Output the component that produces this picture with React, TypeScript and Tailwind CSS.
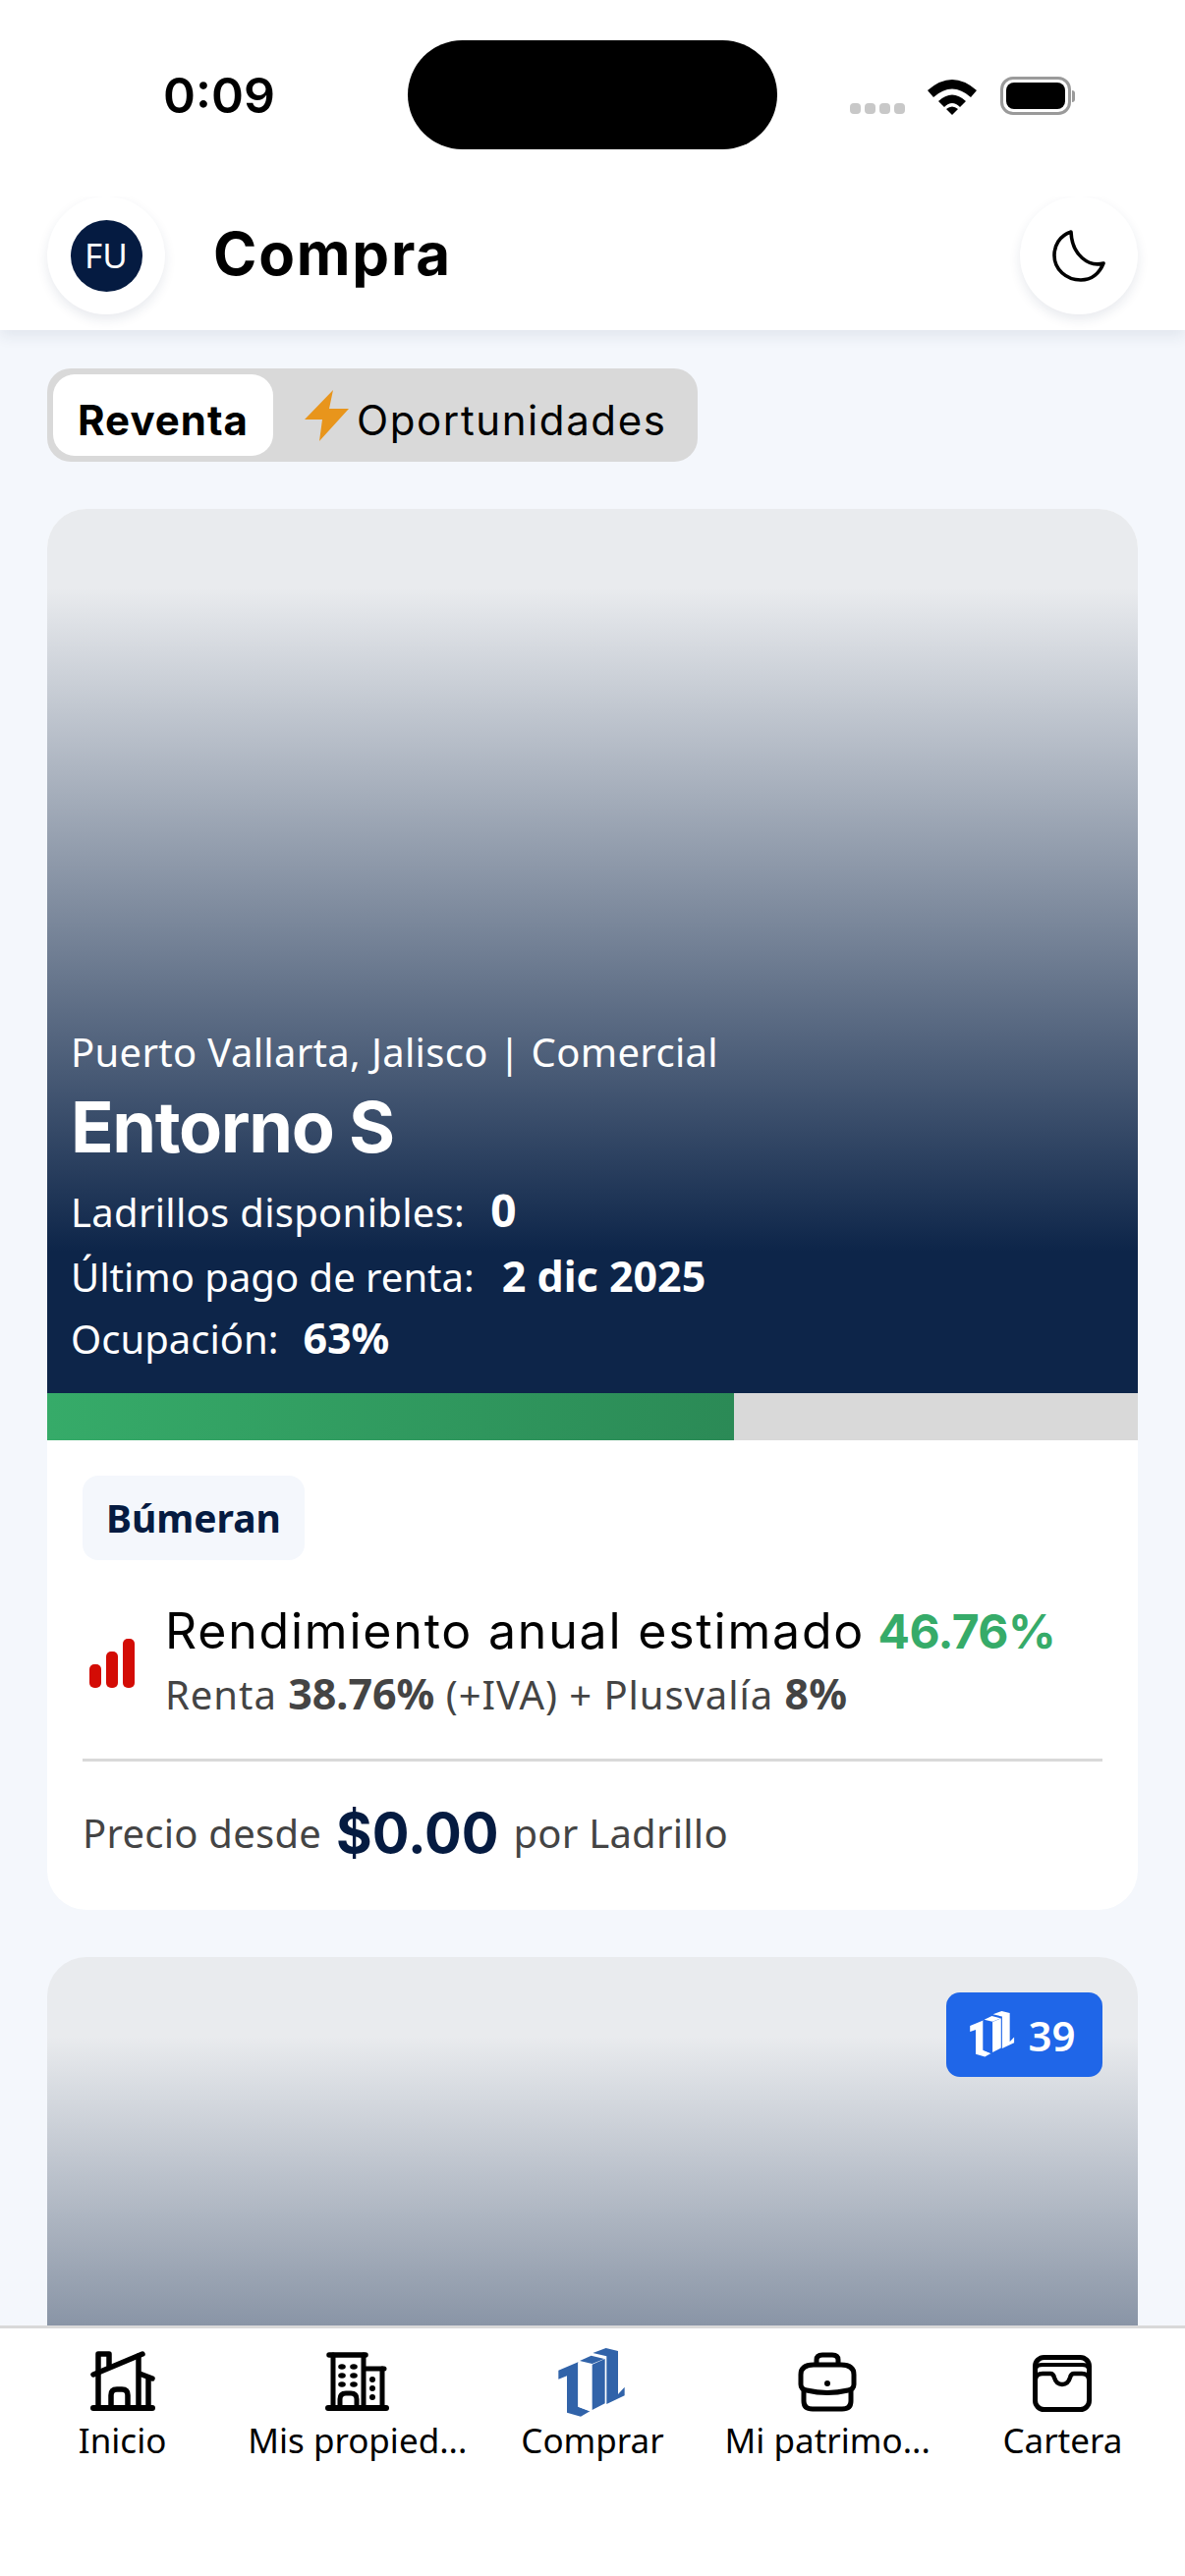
import React from "react";

const heading = "font-['Inter',sans-serif]";
const body = "font-['Noto_Sans',sans-serif]";

function Logo({ className, color, hole }: { className: string; color: string; hole: string }) {
  return (
    <svg viewBox="0 0 285 270" className={className}>
      <polygon fill={color} points="40,95 100,70 100,206 136,220 108,236 66,224 66,112 40,122" />
      <polygon fill={hole} points="100,72 136,76 136,220 100,206" />
      <polygon fill={color} points="105,66 140,50 180,60 143,75" />
      <polygon fill={color} points="143,77 182,60 182,196 143,216" />
      <polygon fill={color} points="145,42 185,27 222,36 222,168 242,146 242,172 187,198 187,52" />
    </svg>
  );
}

function HomeIcon() {
  return (
    <svg viewBox="0 0 90 80" className="w-[90px] h-[80px]" fill="none" stroke="#000" strokeWidth="5.5" strokeLinecap="round" strokeLinejoin="round">
      <path d="M15 31 L65 10" />
      <path d="M20 65 V10 H31 V22" />
      <path d="M61 12 V65" />
      <path d="M62 30 L75 35" />
      <path d="M71 35 V65" />
      <path d="M33 65 V52 Q33 46 39 46 H44 Q50 46 50 52 V65" />
      <path d="M15 65 H75" strokeWidth="6" />
    </svg>
  );
}

function BuildingIcon() {
  return (
    <svg viewBox="0 0 90 80" className="w-[90px] h-[80px]" fill="none" stroke="#000" strokeWidth="5" strokeLinecap="round" strokeLinejoin="round">
      <path d="M16 11 H53" strokeWidth="5.5" />
      <path d="M20 65 V11 M51 11 V65" />
      <path d="M52 25 H72" />
      <path d="M70 25 V65" />
      <path d="M15 65 H74" strokeWidth="6" />
      <path d="M27 65 V56 Q27 50 33 50 H38 Q44 50 44 56 V65" />
      <g fill="#000" stroke="none">
        <ellipse cx="29" cy="23" rx="3.8" ry="2.8" />
        <ellipse cx="41" cy="23" rx="3.8" ry="2.8" />
        <ellipse cx="29" cy="32" rx="3.8" ry="2.8" />
        <ellipse cx="41" cy="32" rx="3.8" ry="2.8" />
        <ellipse cx="29" cy="41" rx="3.8" ry="2.8" />
        <ellipse cx="41" cy="41" rx="3.8" ry="2.8" />
        <circle cx="60" cy="36" r="3" />
        <circle cx="60" cy="45" r="3" />
        <circle cx="60" cy="54" r="3" />
      </g>
    </svg>
  );
}

function CaseIcon() {
  return (
    <svg viewBox="0 0 80 80" className="w-[80px] h-[80px]" fill="none" stroke="#000" strokeWidth="5" strokeLinecap="round" strokeLinejoin="round">
      <path d="M29 20 V16 Q29 11 35 11 H45 Q51 11 51 16 V20" />
      <path d="M26 21 H54 Q67 21 67 31 V41 Q67 46 61 47 Q40 52 19 47 Q13 46 13 41 V31 Q13 21 26 21 Z" />
      <path d="M16 47 V58 Q16 66 25 66 H55 Q64 66 64 58 V47" />
      <circle cx="40" cy="40" r="3" fill="#000" stroke="none" />
    </svg>
  );
}

function WalletIcon() {
  return (
    <svg viewBox="0 0 80 80" className="w-[80px] h-[80px]" fill="none" stroke="#000" strokeWidth="5" strokeLinecap="round" strokeLinejoin="round">
      <rect x="12.5" y="13.5" width="55" height="53" rx="9" />
      <path d="M13 25 Q14 21 20 21 H60 Q66 21 67 25" strokeWidth="4" />
      <path d="M13 35 Q14 30 20 30 H28 Q31 30 32 34 Q34 41 40 41 Q46 41 48 34 Q49 30 52 30 H60 Q66 30 67 35" strokeWidth="4.5" />
    </svg>
  );
}

function NavItem({ label, children }: { label: string; children: React.ReactNode }) {
  return (
    <div className="flex flex-col items-center">
      <div className="h-[80px] flex items-center justify-center">{children}</div>
      <div className={`text-[35px] leading-[44px] -mt-[4px] text-black whitespace-nowrap ${body}`}>{label}</div>
    </div>
  );
}

export default function App() {
  return (
    <div className="w-[1206px] h-[2622px] relative overflow-hidden flex flex-col bg-[#f4f7fc]">
      {/* status bar */}
      <div className="h-[200px] bg-white flex shrink-0 items-start relative z-20">
        <div className={`w-[246px] pl-[166px] mt-[70px] text-[50px] leading-[54px] font-semibold text-black whitespace-nowrap ${heading}`}>0:09</div>
        <div className="ml-[169px] mt-[41px] w-[376px] h-[111px] rounded-[56px] bg-black" />
        <div className="ml-[74px] mt-[105px] flex gap-[4px]">
          <span className="w-[11px] h-[11px] rounded-[4px] bg-[#c8c8c8]" />
          <span className="w-[11px] h-[11px] rounded-[4px] bg-[#c8c8c8]" />
          <span className="w-[11px] h-[11px] rounded-[4px] bg-[#c8c8c8]" />
          <span className="w-[11px] h-[11px] rounded-[4px] bg-[#c8c8c8]" />
        </div>
        <svg viewBox="0 0 52 38" className="ml-[22px] mt-[79px] w-[52px] h-[38px]">
          <path d="M1 13 Q26 -9 51 13 L45 20 Q26 3 7 20 Z" fill="#000" />
          <path d="M12 24 Q26 11 40 24 L34 30 Q26 22 18 30 Z" fill="#000" />
          <path d="M20 32 Q26 27 32 32 L26 38 Z" fill="#000" />
        </svg>
        <div className="ml-[23px] mt-[78px] flex items-center">
          <div className="w-[72px] h-[39px] rounded-[13px] border-[3px] border-[#9a9a9a] p-[3px]">
            <div className="w-full h-full rounded-[8px] bg-black" />
          </div>
          <div className="w-[3px] h-[12px] ml-[1px] rounded-r-[3px] bg-[#9a9a9a]" />
        </div>
      </div>

      {/* header */}
      <div className="h-[136px] shrink-0 bg-white flex items-start justify-between px-[48px] shadow-[0_6px_14px_rgba(30,50,90,0.09)] relative z-10">
        <div className="flex items-start">
          <div className="w-[120px] h-[120px] rounded-full bg-white shadow-[0_5px_12px_rgba(30,50,90,0.10)] flex items-center justify-center">
            <div className={`w-[73px] h-[73px] rounded-full bg-[#051b41] text-white text-[35px] flex items-center justify-center ${body}`}>FU</div>
          </div>
          <div className={`ml-[49px] mt-[24px] text-[60px] leading-[68px] font-bold tracking-[1.8px] text-black ${heading}`}>Compra</div>
        </div>
        <div className="w-[120px] h-[120px] rounded-full bg-white shadow-[0_5px_12px_rgba(30,50,90,0.10)] flex items-center justify-center">
          <svg viewBox="0 0 60 60" className="w-[60px] h-[60px]" fill="none" stroke="#000" strokeWidth="3.6" strokeLinejoin="round">
            <path d="M22 6 C10 10 5 20 5 30 C5 44 17 55 32 55 C43 55 51 48 55 38 C40 42 23 30 22 6 Z" />
          </svg>
        </div>
      </div>

      {/* content */}
      <div className="flex-1 overflow-hidden px-[48px] pt-[39px]">
        <div className="w-[662px] h-[95px] rounded-[24px] bg-[#d9d9d9] flex items-center pl-[6px]">
          <div className={`w-[224px] h-[83px] rounded-[22px] bg-white flex items-center justify-center pt-[10px] text-[42px] font-bold tracking-[1px] text-black ${heading}`}>Reventa</div>
          <svg viewBox="0 0 45 52" className="ml-[32px] w-[45px] h-[52px]">
            <polygon points="29,0 0,30 18,30 15,52 45,19 25,19" fill="#e8951c" />
          </svg>
          <div className={`ml-[8px] pt-[10px] text-[42px] font-normal text-black tracking-[1.6px] ${heading}`}>Oportunidades</div>
        </div>

        {/* card 1 */}
        <div className="mt-[48px] h-[1426px] rounded-[40px] bg-white overflow-hidden flex flex-col">
          <div className="h-[900px] shrink-0 flex flex-col justify-end pl-[24px] pb-[26px] text-white bg-[linear-gradient(to_bottom,#e9ebee_9%,#0d2549_84%)]">
            <div className={`text-[40px] leading-[52px] tracking-[0.33px] ${body}`}>Puerto Vallarta, Jalisco | Comercial</div>
            <div className={`mt-[8px] mb-[4px] text-[72px] leading-[84px] font-bold tracking-[-1.4px] ${heading}`}>Entorno S</div>
            <div className={`mt-[10px] text-[40px] leading-[56px] tracking-[0.3px] ${body}`}>Ladrillos disponibles:<span className="ml-[26px] font-bold text-[46px]">0</span></div>
            <div className={`mt-[9px] text-[40px] leading-[56px] ${body}`}>Último pago de renta:<span className="ml-[28px] font-bold text-[43px]">2 dic 2025</span></div>
            <div className={`mt-[6px] mb-[1px] text-[40px] leading-[56px] ${body}`}>Ocupación:<span className="ml-[25px] font-bold text-[43px]">63%</span></div>
          </div>
          <div className="h-[48px] shrink-0 bg-[#d9d9d9]">
            <div className="h-full w-[63%] bg-[linear-gradient(to_right,#36ab69,#2b8a56)]" />
          </div>
          <div className="px-[36px] pt-[36px] flex flex-col">
            <div className={`self-start w-[226px] h-[86px] rounded-[16px] bg-[#f4f7fc] flex items-center justify-center text-[39px] font-bold text-[#051b41] ${body}`}>Búmeran</div>
            <div className="mt-[39px] flex items-center">
              <svg viewBox="0 0 46 50" className="ml-[7px] w-[46px] h-[50px] mt-[6px]">
                <rect x="0" y="26" width="12" height="24" rx="5" fill="#d30c05" />
                <rect x="17" y="13" width="12" height="37" rx="5" fill="#d30c05" />
                <rect x="34" y="0" width="12" height="50" rx="5" fill="#d30c05" />
              </svg>
              <div className="ml-[31px]">
                <div className={`text-[48px] leading-[66px] text-black whitespace-nowrap ${heading}`}><span className="text-[50px] tracking-[1.8px]">Rendimiento anual estimado</span> <span className="font-bold text-[#36ab69] tracking-[-0.6px]">46.76%</span></div>
                <div className={`mt-[3px] text-[40px] leading-[54px] text-[#444] tracking-[0.95px] whitespace-nowrap ${body}`}>Renta <b className="text-[43px] tracking-[0px]">38.76%</b> (+IVA) + Plusvalía <b className="text-[43px] tracking-[0px]">8%</b></div>
              </div>
            </div>
            <div className="mt-[38px] h-[3px] bg-[#d9d9d9]" />
            <div className={`mt-[37px] flex items-center text-[40px] leading-[72px] text-[#444] tracking-[0.25px] whitespace-nowrap ${body}`}>
              Precio desde<span className={`mx-[15px] text-[56px] font-bold tracking-normal text-[#051b41] ${heading}`}>$0.00</span>por Ladrillo
            </div>
          </div>
        </div>

        {/* card 2 */}
        <div className="mt-[48px] h-[900px] rounded-[40px] overflow-hidden bg-[linear-gradient(to_bottom,#e9ebee_9%,#0d2549_84%)] flex justify-end items-start pt-[36px] pr-[36px]">
          <div className={`w-[159px] h-[86px] rounded-[14px] bg-[#1f66e8] text-white flex items-center justify-center gap-[4px] text-[42px] font-semibold ${body}`}>
            <Logo className="w-[64px] h-[60px] -ml-[12px]" color="#ffffff" hole="#1f66e8" />
            <span>39</span>
          </div>
        </div>
      </div>

      {/* bottom nav */}
      <div className="h-[255px] shrink-0 bg-white border-t-[3px] border-[#d9d9d9] grid grid-cols-5 px-[5px] pt-[16px] items-start relative z-10">
        <NavItem label="Inicio"><HomeIcon /></NavItem>
        <NavItem label="Mis propied..."><BuildingIcon /></NavItem>
        <NavItem label="Comprar"><Logo className="w-[95px] h-[90px]" color="#3163a9" hole="#ffffff" /></NavItem>
        <NavItem label="Mi patrimo..."><CaseIcon /></NavItem>
        <NavItem label="Cartera"><WalletIcon /></NavItem>
      </div>
    </div>
  );
}
